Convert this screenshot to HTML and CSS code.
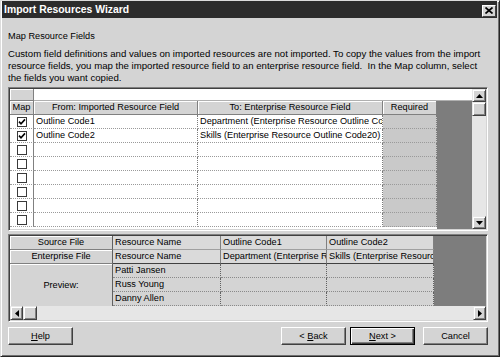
FILE: index.html
```html
<!DOCTYPE html>
<html>
<head>
<meta charset="utf-8">
<link rel="stylesheet" href="styles.css">
</head>
<body>
<div class="window">
  <div class="titlebar">
    <span class="title">Import Resources Wizard</span>
    <span class="close"><svg width="8" height="7" viewBox="0 0 8 7"><path d="M0.5 0.5L7.5 6.5M7.5 0.5L0.5 6.5" stroke="#000" stroke-width="1.7"/></svg></span>
  </div>
  <div class="content">
    <div class="heading">Map Resource Fields</div>
    <p class="desc">Custom field definitions and values on imported resources are not imported. To copy the values from the import<br>resource fields, you map the imported resource field to an enterprise resource field.&nbsp; In the Map column, select<br>the fields you want copied.</p>

    <div class="panel top-panel">
      <div class="tgrid">
        <div class="tdark"></div>
        <div class="hcell corner"></div>
        <div class="edit"></div>
        <div class="hcell">Map</div>
        <div class="hcell">From: Imported Resource Field</div>
        <div class="hcell">To: Enterprise Resource Field</div>
        <div class="hcell">Required</div>

        <div class="cell map"><span class="cb"><svg width="8" height="8" viewBox="0 0 8 8"><path d="M1 3.6L3 5.8L7 1.4" fill="none" stroke="#000" stroke-width="1.6"/></svg></span></div>
        <div class="cell">Outline Code1</div>
        <div class="cell">Department (Enterprise Resource Outline Code1)</div>
        <div class="cell req"></div>

        <div class="cell map"><span class="cb"><svg width="8" height="8" viewBox="0 0 8 8"><path d="M1 3.6L3 5.8L7 1.4" fill="none" stroke="#000" stroke-width="1.6"/></svg></span></div>
        <div class="cell">Outline Code2</div>
        <div class="cell">Skills (Enterprise Resource Outline Code20)</div>
        <div class="cell req"></div>

        <div class="cell map"><span class="cb"></span></div><div class="cell"></div><div class="cell"></div><div class="cell req"></div>
        <div class="cell map"><span class="cb"></span></div><div class="cell"></div><div class="cell"></div><div class="cell req"></div>
        <div class="cell map"><span class="cb"></span></div><div class="cell"></div><div class="cell"></div><div class="cell req"></div>
        <div class="cell map"><span class="cb"></span></div><div class="cell"></div><div class="cell"></div><div class="cell req"></div>
        <div class="cell map"><span class="cb"></span></div><div class="cell"></div><div class="cell"></div><div class="cell req"></div>
        <div class="cell map"><span class="cb"></span></div><div class="cell"></div><div class="cell"></div><div class="cell req"></div>
      </div>
      <div class="vscroll">
        <div class="sbtn vbtn"><svg width="7" height="4" viewBox="0 0 7 4"><polygon points="0,4 3.5,0 7,4" fill="#000"/></svg></div>
        <div class="sbtn vthumb"></div>
        <div class="track"></div>
        <div class="sbtn vbtn"><svg width="7" height="4" viewBox="0 0 7 4"><polygon points="0,0 3.5,4 7,0" fill="#000"/></svg></div>
      </div>
    </div>

    <div class="panel bottom-panel">
      <div class="bgrid">
        <div class="bdark"></div>
        <div class="blabel">Source File</div>
        <div class="bhead">Resource Name</div>
        <div class="bhead">Outline Code1</div>
        <div class="bhead">Outline Code2</div>
        <div class="blabel">Enterprise File</div>
        <div class="bhead strong">Resource Name</div>
        <div class="bhead strong">Department (Enterprise Resource Outline Code1)</div>
        <div class="bhead strong">Skills (Enterprise Resource Outline Code20)</div>
        <div class="blabel preview">Preview:</div>
        <div class="bcell">Patti Jansen</div><div class="bcell"></div><div class="bcell"></div>
        <div class="bcell">Russ Young</div><div class="bcell"></div><div class="bcell"></div>
        <div class="bcell">Danny Allen</div><div class="bcell"></div><div class="bcell"></div>
      </div>
      <div class="hscroll">
        <div class="sbtn hbtn"><svg width="4" height="7" viewBox="0 0 4 7"><polygon points="4,0 0,3.5 4,7" fill="#000"/></svg></div>
        <div class="sbtn hthumb"></div>
        <div class="track"></div>
        <div class="sbtn hbtn"><svg width="4" height="7" viewBox="0 0 4 7"><polygon points="0,0 4,3.5 0,7" fill="#000"/></svg></div>
      </div>
    </div>

    <div class="buttons">
      <div class="btn"><span><u>H</u>elp</span></div>
      <div class="spacer"></div>
      <div class="btn back"><span>&lt; <u>B</u>ack</span></div>
      <div class="btn next"><span><u>N</u>ext &gt;</span></div>
      <div class="btn"><span>Cancel</span></div>
    </div>
  </div>
</div>
</body>
</html>
```

FILE: styles.css
```css
* { box-sizing: border-box; }
html, body { margin: 0; padding: 0; }
body {
  width: 500px;
  height: 357px;
  overflow: hidden;
  font-family: "Liberation Sans", Arial, sans-serif;
  font-size: 9.2px;
  color: #000;
  background: #d4d4d4;
}
.window {
  width: 500px;
  height: 357px;
  border: 1px solid;
  border-color: #dcdcdc #262626 #262626 #dcdcdc;
  box-shadow: inset 1px 1px 0 #fff, inset -1px -1px 0 #707070;
  padding: 0 2px 2px 1px;
  display: flex;
  flex-direction: column;
  background: #d4d4d4;
}
.titlebar {
  height: 17px;
  background: #2c2c2c;
  display: flex;
  align-items: center;
  justify-content: space-between;
  padding: 0 1px 0 2px;
}
.title {
  color: #fff;
  font-weight: bold;
  font-size: 10.4px;
}
.close {
  width: 14px;
  height: 12px;
  margin-top: 2px;
  background: #d4d4d4;
  border: 1px solid;
  border-color: #fff #404040 #404040 #fff;
  display: flex;
  align-items: center;
  justify-content: center;
}
.content {
  flex: 1;
  display: flex;
  flex-direction: column;
  padding-left: 6px;
}
.heading {
  margin-top: 12px;
  line-height: 12px;
}
.desc {
  margin: 6px 0 0;
  line-height: 12px;
  font-size: 9.65px;
  white-space: nowrap;
}
.panel {
  width: 480px;
  display: flex;
  border: 1px solid;
  border-color: #808080 #fff #fff #808080;
  box-shadow: inset 1px 1px 0 #404040, inset -1px -1px 0 #d4d4d4;
  padding: 1px;
}
.top-panel {
  margin-top: 3px;
  height: 144px;
}
.tgrid {
  width: 462px;
  display: grid;
  grid-template-columns: 24px 164px 185px 54px 35px;
  grid-template-rows: 12px 14px repeat(8, 14px) 2px;
  background: #fff;
}
.tdark {
  grid-column: 5;
  grid-row: 2 / 12;
  background: #7d7d7d;
}
.edit {
  grid-column: 2 / 6;
  background: #fff;
  border-bottom: 1px solid #b0b0b0;
}
.hcell {
  background: #d4d4d4;
  box-shadow: inset 1px 1px 0 #fff;
  border-right: 1px solid #808080;
  border-bottom: 1px solid #808080;
  text-align: center;
  line-height: 13px;
  white-space: nowrap;
  overflow: hidden;
}
.cell {
  border-right: 1px dotted #7a7a7a;
  border-bottom: 1px dotted #9a9a9a;
  padding-left: 2px;
  line-height: 13px;
  white-space: nowrap;
  overflow: hidden;
}
.cell.map {
  display: flex;
  align-items: center;
  justify-content: center;
  padding-left: 0;
  border-right: 1px solid #808080;
}
.cell.req { background: #c9c9c9; }
.cb {
  width: 10px;
  height: 10px;
  border: 1px solid #3a3a3a;
  background: #fff;
  display: flex;
  align-items: center;
  justify-content: center;
}
.vscroll {
  width: 14px;
  display: flex;
  flex-direction: column;
}
.sbtn {
  background: #d4d4d4;
  border: 1px solid;
  border-color: #e8e8e8 #404040 #404040 #e8e8e8;
  box-shadow: inset 1px 1px 0 #fff, inset -1px -1px 0 #808080;
  display: flex;
  align-items: center;
  justify-content: center;
}
.vbtn { height: 13px; }
.vthumb { height: 14px; }
.track {
  flex: 1;
  background: #e6e6e6;
}
.bottom-panel {
  margin-top: 3px;
  height: 88px;
  flex-direction: column;
}
.bgrid {
  display: grid;
  grid-template-columns: 103px 108px 106px 107px 52px;
  grid-template-rows: repeat(5, 14px);
  background: #d4d4d4;
}
.bdark {
  grid-column: 5;
  grid-row: 1 / 6;
  background: #7d7d7d;
}
.blabel {
  grid-column: 1;
  background: #d4d4d4;
  box-shadow: inset 1px 1px 0 #fff;
  border-right: 1px solid #606060;
  border-bottom: 1px solid #808080;
  text-align: center;
  line-height: 13px;
}
.blabel.preview {
  grid-row: 3 / 6;
  display: flex;
  align-items: center;
  justify-content: center;
  border-bottom: none;
}
.bhead {
  background: #dadada;
  border-right: 1px solid #808080;
  border-bottom: 1px solid #a0a0a0;
  padding-left: 2px;
  line-height: 13px;
  white-space: nowrap;
  overflow: hidden;
}
.bhead.strong { border-bottom: 1px solid #404040; }
.bcell {
  background: #d4d4d4;
  border-right: 1px dotted #606060;
  border-bottom: 1px dotted #8a8a8a;
  padding-left: 2px;
  line-height: 13px;
  white-space: nowrap;
  overflow: hidden;
}
.hscroll {
  height: 14px;
  display: flex;
}
.hbtn { width: 13px; }
.hthumb { width: 14px; }
.buttons {
  width: 480px;
  margin-top: 5px;
  display: flex;
}
.spacer { flex: 1; }
.btn {
  width: 65px;
  height: 18px;
  background: #d4d4d4;
  border: 1px solid;
  border-color: #fff #404040 #404040 #fff;
  box-shadow: inset -1px -1px 0 #808080;
  display: flex;
  align-items: center;
  justify-content: center;
  line-height: 12px;
}
.btn.back { margin-right: 4px; }
.btn.next {
  margin-right: 8px;
  border-color: #000;
  box-shadow: inset 1px 1px 0 #fff, inset -1px -1px 0 #404040, inset -2px -2px 0 #808080;
}
```
